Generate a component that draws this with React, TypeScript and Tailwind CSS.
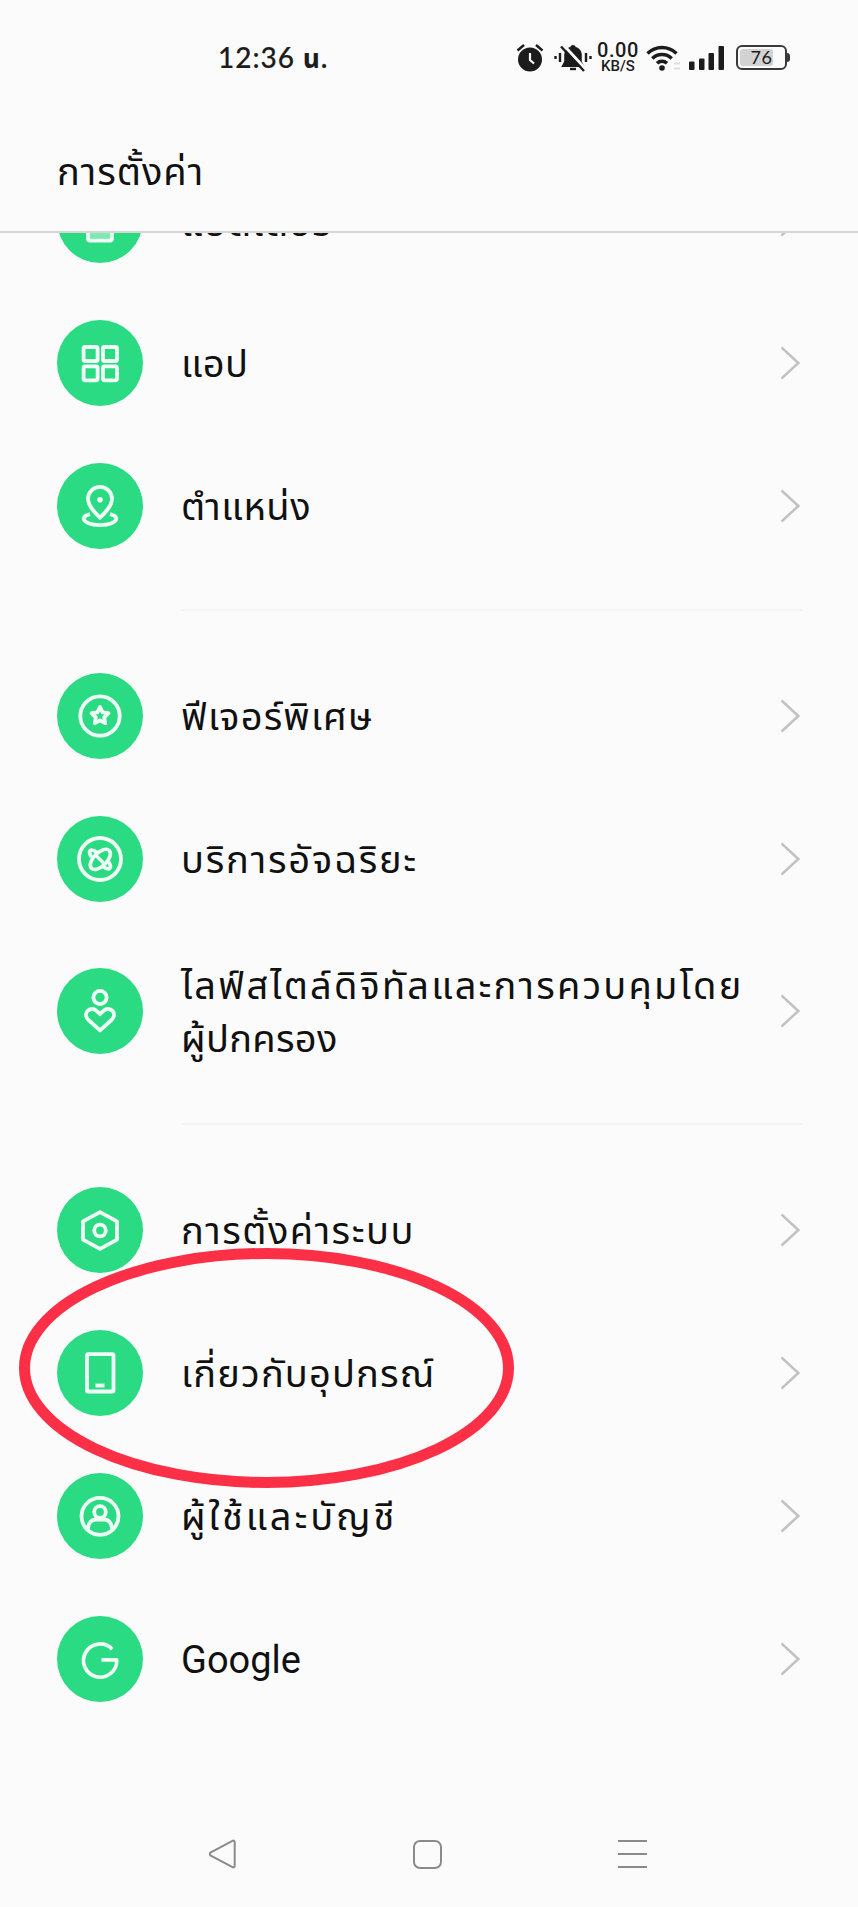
import type { ReactNode } from 'react';

interface Item {
    lines: { text: string; tracking: string }[];
    icon: ReactNode;
}

const batteryIcon = (
    <>
        <rect x="33" y="50" width="20" height="11" fill="#7eeab2" stroke="none" />
        <rect x="31" y="26" width="24" height="37.5" rx="2" />
    </>
);

const appsIcon = (
    <>
        <rect x="26.6" y="27" width="14" height="14" rx="1.5" />
        <rect x="46" y="27" width="14" height="14" rx="1.5" />
        <rect x="26.6" y="46.3" width="14" height="14" rx="1.5" />
        <rect x="46" y="46.3" width="14" height="14" rx="1.5" />
    </>
);

const locationIcon = (
    <>
        <path d="M43 54.8C38 49.5 31 43.5 31 35.8a12 12 0 0 1 24 0C55 43.5 48 49.5 43 54.8Z" />
        <circle cx="43" cy="36.7" r="2.8" fill="#effff5" stroke="none" />
        <path d="M33 51.2c-3.900 1-6.300 2.500-6.300 4.400 0 3.600 7.300 6.600 16.300 6.600s16.300-3 16.300-6.600c0-1.900-2.400-3.400-6.300-4.400" />
    </>
);

const starIcon = (
    <>
        <circle cx="43" cy="43" r="19.7" />
        <path d="M43 34l2.600 5.300 5.900.9-4.300 4.100 1 5.900-5.200-2.800-5.200 2.800 1-5.900-4.300-4.100 5.900-.9Z" />
    </>
);

const smartIcon = (
    <>
        <circle cx="43" cy="43" r="21" />
        <ellipse cx="43.3" cy="43.4" rx="12.6" ry="6.6" transform="rotate(-45 43.3 43.4)" strokeWidth="3.6" />
        <path d="M40 36.500c-3-2.300-5.600-3-6.800-1.800-1.100 1.100-.6 3.500 1.200 6.300M46 50.400c3 2.300 5.600 3 6.800 1.800 1.100-1.100.6-3.500-1.200-6.300" strokeWidth="3.8" />
        <path d="M39.500 40l7 7" strokeWidth="3.4" />
    </>
);

const familyIcon = (
    <>
        <circle cx="43" cy="29.5" r="6.6" />
        <path d="M43 62.300L31.500 52c-3-3-3.200-6.500-1.200-8.900 2.300-2.700 6.400-2.800 9-.4L43 46.200l3.700-3.500c2.600-2.400 6.700-2.300 9 .4 2 2.400 1.800 5.900-1.200 8.900Z" />
    </>
);

const systemIcon = (
    <>
        <path d="M43 25.200l17 9.200v18.200l-17 9.200-17-9.200V34.400Z" />
        <circle cx="43" cy="43.5" r="5.8" />
    </>
);

const phoneIcon = (
    <>
        <rect x="30" y="24.2" width="26.5" height="37.3" rx="1" />
        <path d="M38.500 55.500h9" />
    </>
);

const userIcon = (
    <>
        <circle cx="43" cy="43.3" r="18.5" />
        <circle cx="43" cy="39" r="5.8" />
        <path d="M31 56.500c0-6.500 3.500-10 8.500-10h7c5 0 8.500 3.500 8.500 10" />
    </>
);

const googleIcon = <path d="M55.200 33.200A16.600 16.600 0 1 0 59.700 43.800H44.500" strokeWidth="3.7" />;

const groups: Item[][] = [
    [
        { lines: [{ text: 'แบตเตอรี่', tracking: 'pt-[3px] tracking-[1px]' }], icon: batteryIcon },
        { lines: [{ text: 'แอป', tracking: 'tracking-[0.5px]' }], icon: appsIcon },
        { lines: [{ text: 'ตำแหน่ง', tracking: 'tracking-[0.6px]' }], icon: locationIcon },
    ],
    [
        { lines: [{ text: 'ฟีเจอร์พิเศษ', tracking: 'tracking-[1.15px]' }], icon: starIcon },
        { lines: [{ text: 'บริการอัจฉริยะ', tracking: 'tracking-[1.8px]' }], icon: smartIcon },
        {
            lines: [
                { text: 'ไลฟ์สไตล์ดิจิทัลและการควบคุมโดย', tracking: 'tracking-[2.2px]' },
                { text: 'ผู้ปกครอง', tracking: 'tracking-[0.3px]' },
            ],
            icon: familyIcon,
        },
    ],
    [
        { lines: [{ text: 'การตั้งค่าระบบ', tracking: 'tracking-[1.5px]' }], icon: systemIcon },
        { lines: [{ text: 'เกี่ยวกับอุปกรณ์', tracking: 'tracking-[1.15px]' }], icon: phoneIcon },
        { lines: [{ text: 'ผู้ใช้และบัญชี', tracking: 'tracking-[2.9px]' }], icon: userIcon },
        { lines: [{ text: 'Google', tracking: 'tracking-normal' }], icon: googleIcon },
    ],
];

function StatusBar() {
    return (
        <div className="flex h-[116px] items-center pl-[218px] text-[#1c1c1c]">
            <span className="w-[298px] whitespace-nowrap pb-[2px] font-['Lato','Noto_Sans_Thai','Noto_Sans',sans-serif] text-[28px] font-medium tracking-[1px] [-webkit-text-stroke:0.2px]">
                12:36 <span className="text-[26px] font-bold">น.</span>
            </span>
            <svg width="28" height="30" viewBox="0 0 28 30" fill="none" stroke="currentColor" strokeWidth="2.4">
                <circle cx="14" cy="16.5" r="12" fill="currentColor" stroke="none" />
                <path d="M1.500 7.500L8 2M26.500 7.500L20 2" />
                <path d="M14 10v7l4 3.500" stroke="#fafafa" strokeWidth="2.2" />
            </svg>
            <svg className="ml-[9px]" width="40" height="30" viewBox="0 0 40 30" fill="none" stroke="currentColor" strokeWidth="2.4">
                <path d="M20 2a3 3 0 0 1 2.800 2c4 1.200 6 4.500 6 8.500v6l3 5.500H8.200l3-5.500v-6c0-4 2-7.300 6-8.500A3 3 0 0 1 20 2Z" fill="currentColor" stroke="none" />
                <path d="M17 26h6" />
                <path d="M10 1.500L33.500 27" stroke="#fafafa" strokeWidth="3" />
                <path d="M8 3.500L31 28" />
                <path d="M7 10v9M2.500 13v3M33 10v9M37.500 13v3" />
            </svg>
            <div className="ml-[4px] flex w-[42px] flex-col items-center pb-px font-['Roboto',sans-serif] font-medium leading-none">
                <span className="text-[20px] leading-[17px] tracking-[0.6px]">0.00</span>
                <span className="text-[15px] leading-[15px]">KB/S</span>
            </div>
            <svg className="ml-[7px]" width="36" height="28" viewBox="0 0 36 28" fill="none" stroke="currentColor" strokeWidth="3.4">
                <path d="M1.500 9.500a20.500 20.500 0 0 1 29 0M6.300 14.500a13.800 13.800 0 0 1 19.400 0M11 19.300a7.200 7.200 0 0 1 10 0" />
                <circle cx="16" cy="24" r="2.8" fill="currentColor" stroke="none" />
                <path d="M28 19.500h6M28 24.500h6" stroke="#dedede" strokeWidth="2" />
            </svg>
            <svg className="ml-[7px]" width="36" height="26" viewBox="0 0 36 26" fill="currentColor">
                <rect x="0" y="16.5" width="5.5" height="8.5" rx="1" />
                <rect x="10" y="13.5" width="5.5" height="11.5" rx="1" />
                <rect x="19.5" y="8" width="5.5" height="17" rx="1" />
                <rect x="29.5" y="1" width="5.5" height="24" rx="1" />
            </svg>
            <div className="ml-[11px] flex items-center pb-[2px]">
                <div className="relative flex h-[25px] w-[51px] items-center justify-center overflow-hidden rounded-[6px] border-2 border-[#3a3a3a] font-['Lato',sans-serif] text-[18px] leading-none">
                    <span className="absolute inset-y-[2px] left-[2px] w-[33px] rounded-[3px] bg-[#d2d2d2]" />
                    <span className="relative tracking-[0.5px]">76</span>
                </div>
                <span className="h-[9px] w-[3px] rounded-r bg-[#3a3a3a]" />
            </div>
        </div>
    );
}

function Row({ lines, icon }: Item) {
    return (
        <li className={`flex items-center pb-px pl-[57px] pr-[58px] ${lines.length > 1 ? 'h-[161px]' : 'h-[143px]'}`}>
            <span className="size-[86px] shrink-0 rounded-full bg-[#2bdb83]">
                <svg viewBox="0 0 86 86" fill="none" stroke="#effff5" strokeWidth="3.8" strokeLinejoin="round">
                    {icon}
                </svg>
            </span>
            <div className="ml-[38px] flex flex-col whitespace-nowrap pt-[3px] text-[38px] leading-[53px] text-[#111]">
                {lines.map(({ text, tracking }) => (
                    <span key={text} className={tracking}>{text}</span>
                ))}
            </div>
            <svg className="ml-auto shrink-0" width="20" height="34" viewBox="0 0 20 34" fill="none" stroke="#c2c2c2" strokeWidth="2.5">
                <path d="M1.500 1.500L18.300 17L1.500 32.500" />
            </svg>
        </li>
    );
}

export default function App() {
    return (
        <div className="relative flex h-[1907px] w-[858px] flex-col overflow-hidden bg-[#fbfbfb] font-['Roboto','Noto_Sans_Thai','Noto_Sans',sans-serif]">
            <header className="relative z-10 h-[233px] shrink-0 border-b-2 border-[#d6d6d6] bg-[#fbfbfb]">
                <StatusBar />
                <h1 className="pl-[57px] pt-[30px] text-[38px] leading-[53px] tracking-[1px] text-[#111]">การตั้งค่า</h1>
            </header>

            <main className="-mt-[84px]">
                {groups.map((group, i) => (
                    <ul key={i}>
                        {i > 0 && (
                            <li className="flex h-[67px] items-center pb-[4px] pl-[181px] pr-[56px]">
                                <span className="h-[2px] w-full bg-[#f5f5f5]" />
                            </li>
                        )}
                        {group.map((item) => (
                            <Row key={item.lines[0].text} {...item} />
                        ))}
                    </ul>
                ))}
            </main>

            {/* Navigasi sistem */}
            <nav className="mt-auto flex h-[106px] items-center pl-[207px] text-[#8a8a8a]">
                <svg width="30" height="30" viewBox="0 0 30 30" fill="none" stroke="currentColor" strokeWidth="2">
                    <path d="M25.500 1.800a1.500 1.500 0 0 1 2.200 1.400v23.600a1.500 1.500 0 0 1-2.200 1.400L3.800 16.600a1.800 1.800 0 0 1 0-3.200Z" />
                </svg>
                <span className="ml-[176px] size-[29px] rounded-[7px] border-2 border-current" />
                <span className="ml-[176px] flex w-[29px] flex-col gap-[11px]">
                    <span className="h-[2px] bg-current" />
                    <span className="h-[2px] bg-current" />
                    <span className="h-[2px] bg-current" />
                </span>
            </nav>

            <svg className="absolute left-[18px] top-[1248px] z-20" width="498" height="242" viewBox="0 0 498 242" fill="none">
                <ellipse cx="248.5" cy="120" rx="242" ry="114.5" stroke="#fb2f45" strokeWidth="11" />
            </svg>
        </div>
    );
}
